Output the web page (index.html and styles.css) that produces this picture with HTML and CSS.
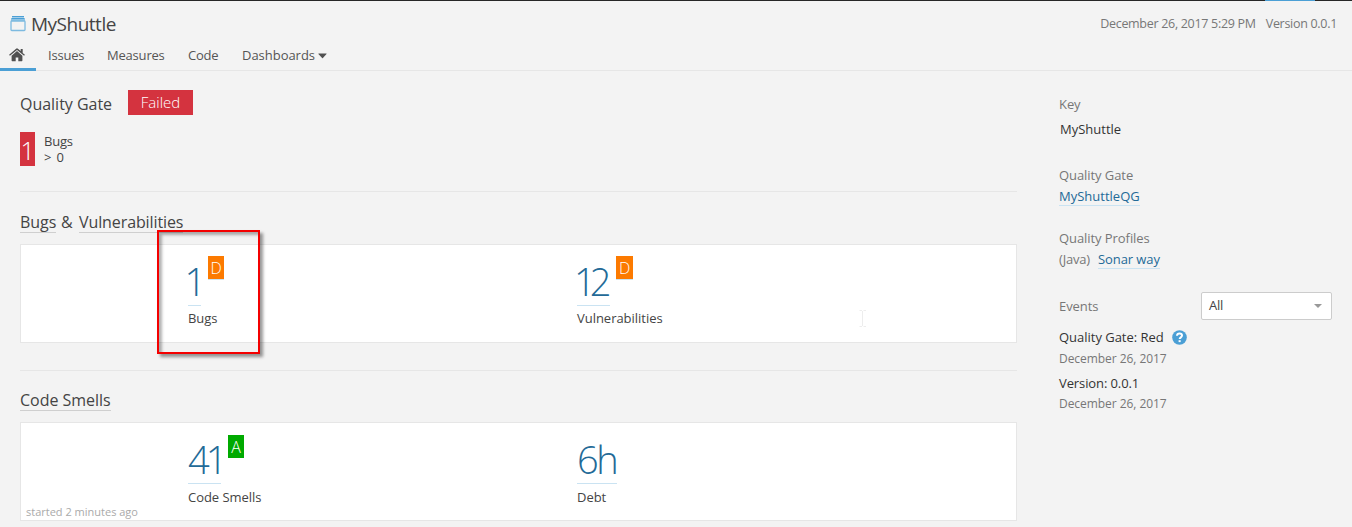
FILE: index.html
```html
<!DOCTYPE html>
<html lang="en">
<head>
<meta charset="utf-8">
<title>MyShuttle</title>
<link rel="stylesheet" href="styles.css">
</head>
<body>
<div class="topbar"><span class="topbar-active"></span></div>
<header class="header">
  <div class="title-row">
    <svg class="project-icon" width="16" height="16" viewBox="0 0 16 16">
      <path d="M2 .5h12v2H2z" fill="#a5cfea"/>
      <path d="M2 .5h12" fill="none" stroke="#4b9fd5"/>
      <path d="M1 2.500h14v2.500H1z" fill="#8fc4e5"/>
      <path d="M1.500 2.500h13" fill="none" stroke="#4b9fd5"/>
      <rect x="1" y="5" width="14" height="9.500" rx=".8" fill="#f3f3f3" stroke="#7dbae0" stroke-width="1.300"/>
    </svg>
    <h1 class="title">MyShuttle</h1>
    <div class="analysis"><span class="date">December 26, 2017 5:29 PM</span><span class="version">Version 0.0.1</span></div>
  </div>
  <nav class="nav">
    <a class="tab home"><svg width="16" height="14" viewBox="0 0 16 14"><path fill="#505050" d="M8 3.100 2.600 7.700v4.900c0 .4.2.6.6.6h3.500V9.400h2.600v3.800h3.500c.4 0 .6-.2.6-.6V7.700z"/><path fill="#505050" d="M15.900 6.800 13.700 4.900V1.100h-2v2L8.900.7a1.400 1.400 0 0 0-1.800 0L.1 6.800l.8 1L8 2l7.100 5.800z"/></svg></a>
    <a class="tab issues">Issues</a>
    <a class="tab measures">Measures</a>
    <a class="tab code">Code</a>
    <a class="tab dashboards"><span>Dashboards</span><svg width="9" height="6" viewBox="0 0 9 6"><path d="M.8.4h7.400q.8 0 .3.700L4.900 5q-.4.4-.8 0L.4 1.100Q0 .4.8.4z" fill="#505050"/></svg></a>
  </nav>
</header>
<div class="page">
  <main class="main">
    <section class="gate">
      <div class="gate-head"><h2 class="heading gate-title">Quality Gate</h2><span class="failed">Failed</span></div>
      <div class="condition"><span class="condition-value">1</span><div class="condition-text"><div class="cond-name">Bugs</div><div class="cond-limit">&gt; 0</div></div></div>
    </section>
    <section class="domain">
      <h2 class="heading"><a class="u h-bugs">Bugs</a><span class="amp">&amp;</span><a class="u h-vuln">Vulnerabilities</a></h2>
      <div class="card">
        <div class="measure"><div class="value-row"><span class="value v1">1</span><span class="rating d">D</span></div><div class="label l-bugs">Bugs</div></div>
        <div class="measure"><div class="value-row"><span class="value v12">12</span><span class="rating d wide">D</span></div><div class="label l-vuln">Vulnerabilities</div></div>
        <svg class="cursor" width="8" height="17" viewBox="0 0 8 17"><path d="M.5.5h2.500M4.500.5H7M3.500 1v15M.5 16.500H3M4.500 16.500H7" stroke="#ededed" fill="none"/></svg>
        <div class="highlight"></div>
      </div>
    </section>
    <section class="domain domain-smells">
      <h2 class="heading"><a class="u h-smells">Code Smells</a></h2>
      <div class="card">
        <div class="measure"><div class="value-row"><span class="value v41">41</span><span class="rating a">A</span></div><div class="label l-smells">Code Smells</div></div>
        <div class="measure"><div class="value-row"><span class="value v6h">6h</span></div><div class="label l-debt">Debt</div></div>
        <div class="started">started 2 minutes ago</div>
      </div>
    </section>
  </main>
  <aside class="side">
    <h4 class="meta m-key">Key</h4>
    <div class="key">MyShuttle</div>
    <h4 class="meta m-gate">Quality Gate</h4>
    <div class="line"><a class="link k-gate">MyShuttleQG</a></div>
    <h4 class="meta m-prof">Quality Profiles</h4>
    <div class="line"><span class="lang">(Java)</span><a class="link k-sonar">Sonar way</a></div>
    <div class="events-head"><h4 class="meta m-events">Events</h4>
      <div class="select"><span>All</span><svg width="8" height="4" viewBox="0 0 8 4"><path d="M0 0h8L4 4z" fill="#999"/></svg></div></div>
    <div class="event"><span class="e-gate">Quality Gate: Red</span><svg class="help" width="15" height="15" viewBox="0 0 15 15"><circle cx="7.500" cy="7.500" r="7.300" fill="#4b9fd5"/><path d="M5 5.700C5.100 4.300 6.100 3.600 7.500 3.600s2.500.8 2.500 2c0 1.700-2.300 1.800-2.300 3.500" fill="none" stroke="#fff" stroke-width="2"/><path d="M6.600 10.200h2.100v1.900H6.600z" fill="#fff"/></svg></div>
    <div class="event-date">December 26, 2017</div>
    <div class="event second"><span class="e-ver">Version: 0.0.1</span></div>
    <div class="event-date last">December 26, 2017</div>
  </aside>
</div>
</body>
</html>
```
FILE: styles.css
```css
* { box-sizing: border-box; }
html, body { height: 527px; overflow: hidden; }
body { margin: 0; background: #f3f3f3; color: #444; font: 13px/20px "Open Sans", "Noto Sans", sans-serif; letter-spacing: -0.2px; }
h1, h2, h4 { margin: 0; font-weight: 400; }
svg { display: block; flex: none; }
span, a, h1, h2, h4 { white-space: nowrap; }
.topbar { height: 1px; background: #262626; display: flex; justify-content: flex-end; padding-right: 37px; }
.topbar-active { width: 50px; background: #4b9fd5; }
.header { height: 70px; border-bottom: 1px solid #e6e6e6; }
.title-row { height: 43px; padding: 10px 15px 0 10px; display: flex; align-items: flex-start; }
.project-icon { margin-top: 5px; }
.title { margin-left: 5px; font-size: 19px; line-height: 26px; letter-spacing: -0.5px; }
.analysis { margin-left: auto; margin-top: 3px; display: flex; gap: 10px; color: #777; font-size: 12.5px; letter-spacing: -0.3px; }
.nav { display: flex; height: 27px; color: #555; }
.tab { line-height: 23px; display: block; }
.home { width: 36px; height: 27px; padding: 4px 0 0 9px; border-bottom: 3px solid #4b9fd5; }
.issues { margin-left: 12px; width: 59px; }
.measures { width: 81px; }
.code { width: 54px; }
.dashboards { display: flex; align-items: center; height: 23px; gap: 3px; letter-spacing: -0.03px; }
.page { display: flex; }
.main { width: 997px; margin-left: 20px; }
.heading { font-size: 16px; line-height: 22px; letter-spacing: -0.02px; }
.gate { height: 120px; padding-top: 19px; }
.gate-head { display: flex; height: 25px; }
.gate-title { width: 108px; margin-top: 3px; }
.failed { width: 65px; height: 25px; line-height: 25px; background: #d4333f; color: #fff; text-align: center; font-size: 15px; font-weight: 300; letter-spacing: 0; }
.condition { display: flex; margin-top: 17px; }
.condition-value { width: 15px; height: 34px; background: #d4333f; color: #fff; font-size: 25px; line-height: 36px; font-weight: 300; text-align: center; }
.condition-text { margin-left: 9px; padding-top: 1px; line-height: 16px; }
.cond-limit { word-spacing: 2px; }
.domain { border-top: 1px solid #e6e6e6; height: 179px; padding-top: 19px; }
.domain .heading { display: flex; height: 33px; }
.domain-smells { padding-top: 18px; }
.u { height: 22px; border-bottom: 1px solid #cfcfcf; }
.h-bugs { width: 36px; }
.h-vuln { width: 104px; letter-spacing: -0.1px; }
.h-smells { width: 91px; letter-spacing: -0.02px; }
.amp { margin: 0 0 0 5px; width: 18px; }
.card { position: relative; height: 99px; border: 1px solid #e6e6e6; background: #fff; display: flex; padding: 11px 0 0 167px; }
.measure { width: 389px; }
.value-row { display: flex; align-items: flex-start; height: 50px; }
.value { height: 50px; border-bottom: 1px solid #cae3f2; color: #236a97; font-size: 38px; line-height: 51px; font-weight: 300; }
.v1 { width: 13px; text-indent: -3.5px; }
.v12 { width: 33px; letter-spacing: -6px; text-indent: -3px; }
.v41 { width: 33px; letter-spacing: -4px; }
.v6h { width: 40px; letter-spacing: -2.5px; }
.rating { margin-left: 7px; width: 16px; height: 24px; color: #fff; font-size: 16px; font-weight: 300; line-height: 24px; text-align: center; border-bottom: 1px solid #cae3f2; }
.v12 + .rating { margin-left: 6px; }
.wide { width: 17px; }
.d { background: #fc7a00; background-clip: padding-box; }
.a { background: #0a0; height: 23px; margin-top: 1px; border-bottom: 0; }
.label { margin-top: 3px; letter-spacing: -0.03px; line-height: 19px; }
.domain-smells .label { margin-top: 4px; }
.cursor { position: absolute; left: 838px; top: 65px; }
.highlight { position: absolute; left: 136px; top: -15px; width: 103px; height: 124px; border: 2px solid #f40000; box-shadow: 3px 3px 3px rgba(0,0,0,.4), inset 3px 3px 3px rgba(0,0,0,.3); }
.started { position: absolute; left: 5px; bottom: 0; color: #aaa; font-size: 11px; line-height: 17px; letter-spacing: 0; }
.side { margin-left: 42px; width: 273px; padding-top: 23px; }
.meta { font-size: 13px; line-height: 20px; color: #777; letter-spacing: -0.07px; }
.key { margin: 5px 0 26px 1px; color: #333; letter-spacing: 0; }
.line { display: flex; height: 21px; margin-bottom: 22px; }
.link { color: #236a97; border-bottom: 1px solid #cae3f2; line-height: 20px; height: 20px; margin-top: 1px; letter-spacing: 0; }
.k-sonar { letter-spacing: -0.08px; }
.lang { color: #777; width: 39px; margin-top: 1px; }
.events-head { display: flex; justify-content: space-between; align-items: center; margin-top: 23px; height: 28px; }
.select { width: 131px; height: 28px; border: 1px solid #ccc; border-radius: 2px; background: #fff; display: flex; align-items: center; justify-content: space-between; padding: 0 9px 0 7px; }
.select span { line-height: 25px; height: 27px; }
.event { display: flex; height: 20px; margin-top: 7px; color: #333; letter-spacing: -0.02px; }
.help { margin: 3px 0 0 8px; }
.event-date { color: #777; font-size: 12px; line-height: 20px; margin-top: 2px; letter-spacing: -0.05px; }
.second { margin-top: 4px; letter-spacing: -0.1px; }
.last { margin-top: 1px; }
```
